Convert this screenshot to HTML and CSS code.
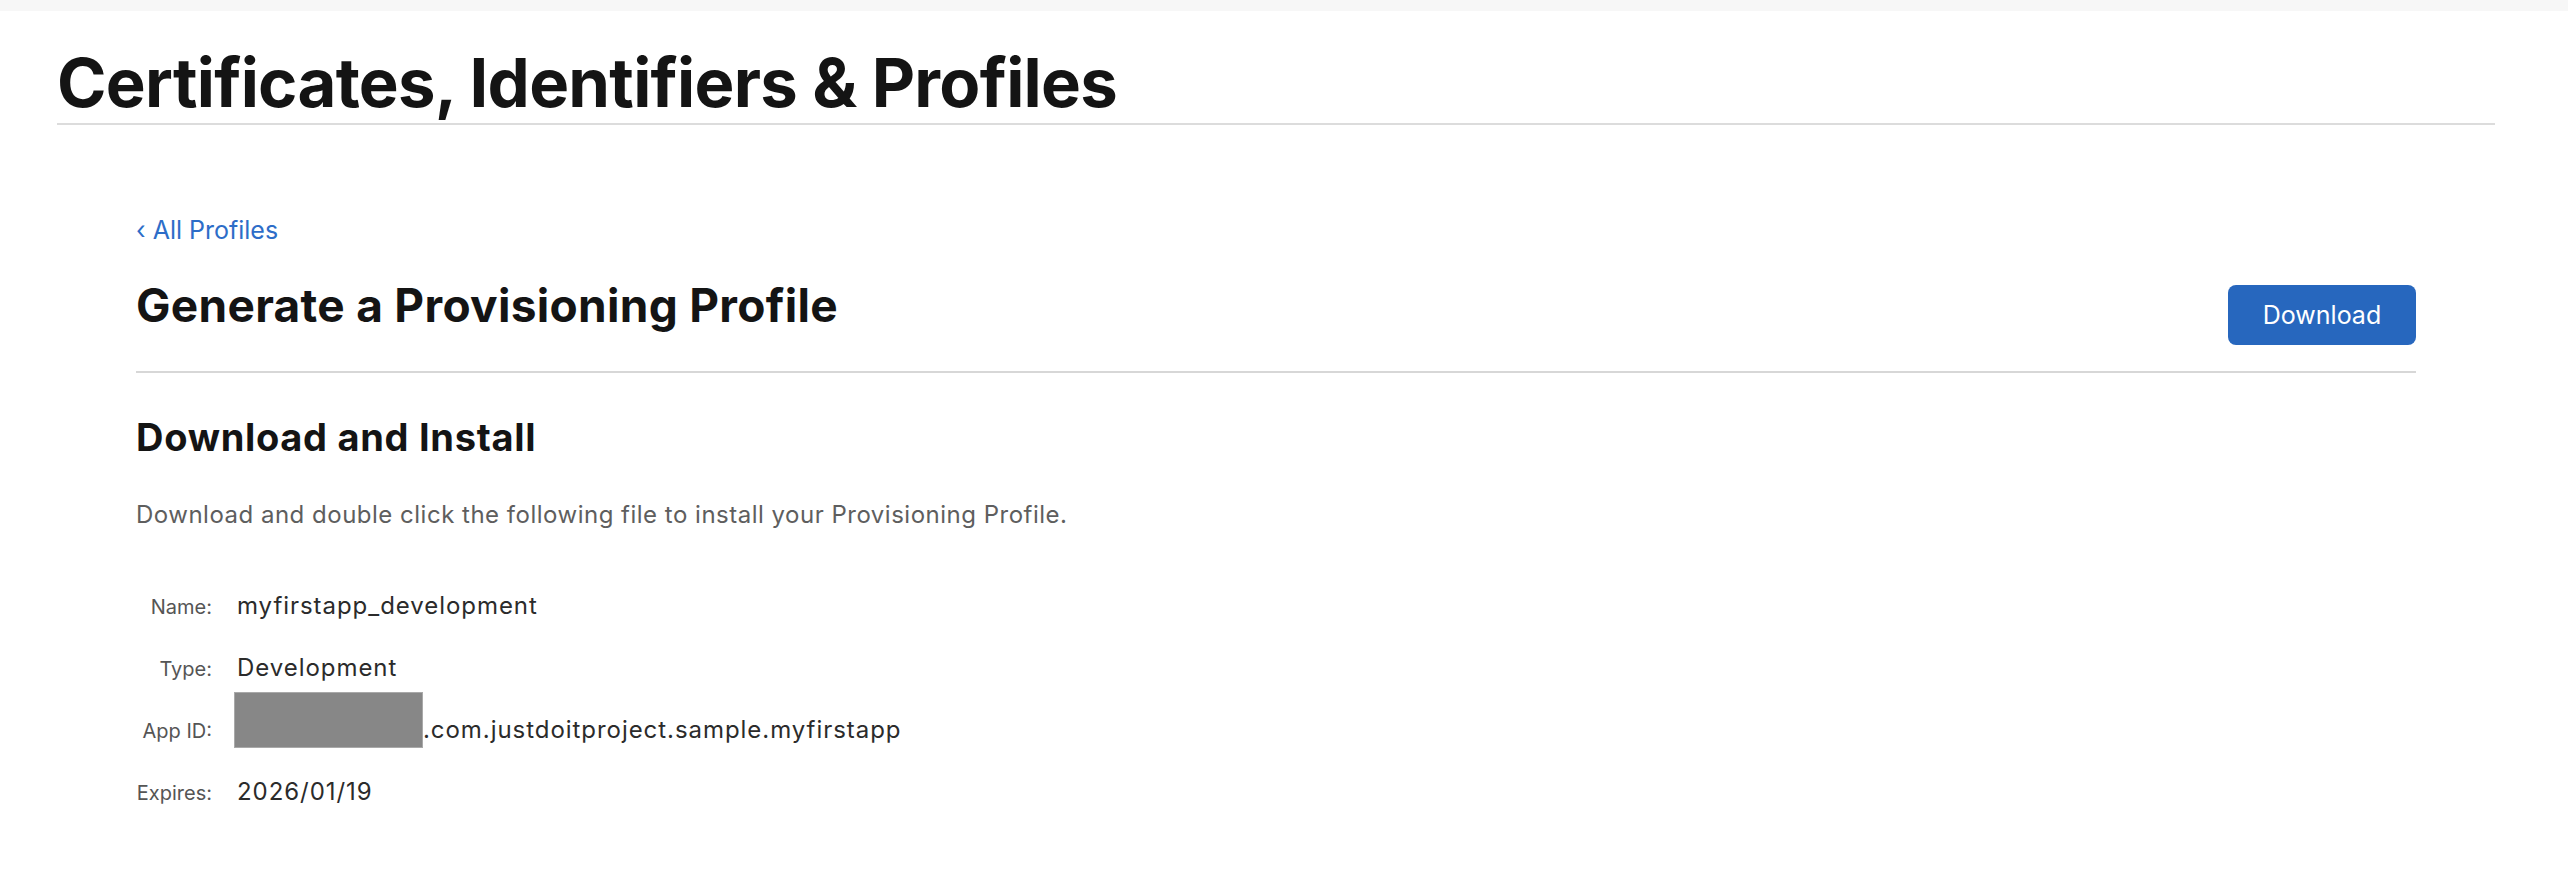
FILE: index.html
```html
<!DOCTYPE html>
<html lang="en">
<head>
<meta charset="utf-8">
<title>Certificates, Identifiers &amp; Profiles</title>
<link rel="stylesheet" href="styles.css">
</head>
<body>
<div class="topbar"></div>
<header class="page-header">
  <h1 class="page-title">Certificates, Identifiers &amp; Profiles</h1>
</header>
<main class="content">
  <a class="back-link" href="#"><span class="chev">‹</span> All Profiles</a>
  <div class="title-row">
    <h2 class="section-title">Generate a Provisioning Profile</h2>
    <button class="btn-primary" type="button">Download</button>
  </div>
  <h3 class="sub-title">Download and Install</h3>
  <p class="intro">Download and double click the following file to install your Provisioning Profile.</p>
  <dl class="details">
    <dt>Name:</dt>
    <dd>myfirstapp_development</dd>
    <dt>Type:</dt>
    <dd>Development</dd>
    <dt>App ID:</dt>
    <dd><span class="redacted"></span>.com.justdoitproject.sample.myfirstapp</dd>
    <dt>Expires:</dt>
    <dd>2026/01/19</dd>
  </dl>
</main>
</body>
</html>
```

FILE: styles.css
```css
html, body {
  margin: 0;
  padding: 0;
  background: #ffffff;
}

body {
  font-family: Inter, "Noto Sans", "Liberation Sans", sans-serif;
  color: #1d1d1f;
}

.topbar {
  height: 11px;
  background: #f7f7f7;
}

.page-header {
  margin: 0 73px 0 57px;
  padding-top: 32px;
  border-bottom: 2px solid #dcdcdc;
}

.page-title {
  margin: 0;
  font-size: 67px;
  line-height: 80px;
  font-weight: 700;
  color: #141414;
  letter-spacing: -0.72px;
}

.content {
  padding: 90px 152px 40px 136px;
}

.back-link {
  display: inline-block;
  font-size: 25px;
  line-height: 30px;
  color: #2d6dc8;
  text-decoration: none;
}

.title-row {
  display: flex;
  justify-content: space-between;
  align-items: flex-start;
  margin-top: 33px;
  padding-bottom: 26px;
  border-bottom: 2px solid #d7d7d7;
}

.section-title {
  margin: 0;
  font-size: 46px;
  line-height: 54px;
  font-weight: 700;
  color: #141414;
  letter-spacing: 0.3px;
}

.btn-primary {
  margin-top: 7px;
  width: 188px;
  height: 60px;
  border: 0;
  border-radius: 8px;
  background: #2767be;
  color: #ffffff;
  font-family: inherit;
  font-size: 25px;
  font-weight: 400;
  cursor: pointer;
}

.sub-title {
  margin: 42px 0 0;
  font-size: 38px;
  line-height: 44px;
  font-weight: 700;
  color: #141414;
  letter-spacing: 0.7px;
}

.intro {
  margin: 41px 0 0;
  font-size: 24px;
  line-height: 30px;
  color: #5e5e5e;
  letter-spacing: 0.5px;
}

.details {
  display: grid;
  grid-template-columns: 76px auto;
  grid-auto-rows: 30px;
  column-gap: 25px;
  row-gap: 32px;
  align-items: baseline;
  margin: 61px 0 0;
  line-height: 30px;
}

.details dt {
  text-align: right;
  font-size: 20px;
  color: #555555;
}

.details dd {
  margin: 0;
  font-size: 24px;
  color: #2b2b2b;
  letter-spacing: 0.95px;
}

.redacted {
  display: inline-block;
  width: 189px;
  height: 56px;
  margin: -26px 0 0 -3px;
  vertical-align: -10px;
  background: #878787;
  box-sizing: border-box;
  border: 1px solid #a9a9a9;
}
```
